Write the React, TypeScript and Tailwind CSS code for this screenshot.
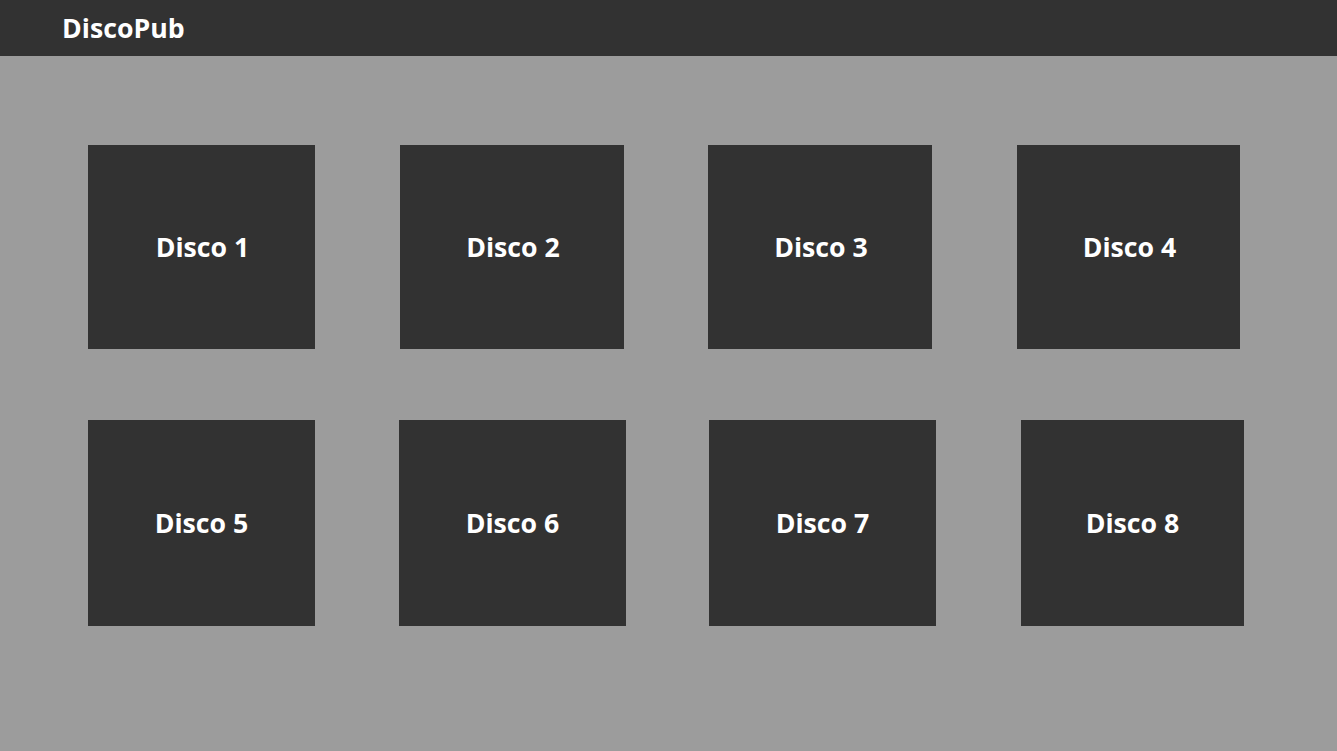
const ROWS = [
  {
    className: "mt-[89px] h-[204px]",
    discos: [
      { name: "Disco 1", cls: "ml-[88px] w-[227px] pl-[2px]" },
      { name: "Disco 2", cls: "ml-[85px] w-[224px] pl-[2px]" },
      { name: "Disco 3", cls: "ml-[84px] w-[224px] pl-[2px]" },
      { name: "Disco 4", cls: "ml-[85px] w-[223px] pl-[2px]" },
    ],
  },
  {
    className: "mt-[71px] h-[206px]",
    discos: [
      { name: "Disco 5", cls: "ml-[88px] w-[227px]" },
      { name: "Disco 6", cls: "ml-[84px] w-[227px]" },
      { name: "Disco 7", cls: "ml-[83px] w-[227px]" },
      { name: "Disco 8", cls: "ml-[85px] w-[223px]" },
    ],
  },
];

function DiscoCard({ name, cls }: { name: string; cls: string }) {
  return (
    <div className={`${cls} flex h-full shrink-0 items-center justify-center bg-[#323232]`}>
      <span className="text-[26.7px] font-bold text-white">{name}</span>
    </div>
  );
}

export default function App() {
  return (
    <div className="min-h-[751px] bg-[#9c9c9c] font-['Open_Sans',sans-serif]">
      <header className="flex h-[56px] items-center bg-[#323232] px-[62px]">
        <h1 className="text-[26.7px] font-bold text-white">DiscoPub</h1>
      </header>

      {ROWS.map((row, i) => (
        <div key={i} className={`flex ${row.className}`}>
          {row.discos.map((d) => (
            <DiscoCard key={d.name} name={d.name} cls={d.cls} />
          ))}
        </div>
      ))}
    </div>
  );
}
